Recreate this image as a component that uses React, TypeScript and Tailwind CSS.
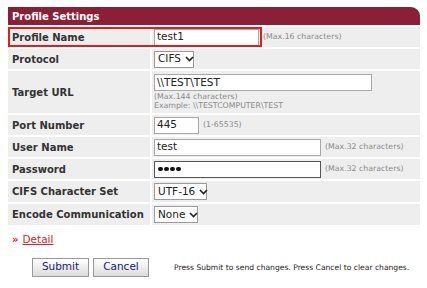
import React from "react";

const font = { fontFamily: '"DejaVu Sans", Verdana, sans-serif' };

function Chevron() {
  return (
    <svg width="9" height="6" viewBox="0 0 9 6" className="ml-[4px] shrink-0">
      <path d="M1 1l3.5 3.5L8 1" fill="none" stroke="#222" strokeWidth="1.6" />
    </svg>
  );
}

function Select({ value, w }: { value: string; w: string }) {
  return (
    <div
      className={`flex items-center h-[17px] ${w} border border-[#9a9a9a] bg-white px-[3px] text-[10.5px] text-[#222] whitespace-nowrap`}
    >
      <span>{value}</span>
      <Chevron />
    </div>
  );
}

function Input({
  value,
  w,
  dark,
  children,
}: {
  value?: string;
  w: string;
  dark?: boolean;
  children?: React.ReactNode;
}) {
  return (
    <div
      className={`flex items-center h-[17px] ${w} shrink-0 border ${
        dark ? "border-[#555]" : "border-[#a8a8a8]"
      } bg-white px-[2px] text-[10.5px] text-[#222] whitespace-nowrap`}
    >
      {value}
      {children}
    </div>
  );
}

function Note({ children }: { children: React.ReactNode }) {
  return (
    <span className="text-[7.8px] text-[#8a8a8a] ml-[4px] whitespace-nowrap">{children}</span>
  );
}

function Row({
  label,
  children,
  h = "h-[20px]",
}: {
  label: string;
  children: React.ReactNode;
  h?: string;
}) {
  return (
    <div className={`flex gap-[2px] ${h}`}>
      <div className="w-[142px] shrink-0 bg-[#eeeeee] flex items-center pl-[4px] text-[10px] font-bold text-[#333] whitespace-nowrap">
        {label}
      </div>
      <div className="flex-1 bg-[#eeeeee] flex items-center pl-[2px]">{children}</div>
    </div>
  );
}

export default function App() {
  return (
    <div className="w-[427px] h-[288px] bg-white pt-[7px]" style={font}>
      <div className="w-[412px] ml-[8px]">
        <div className="h-[18px] bg-[#8b1f37] rounded-tr-[9px] flex items-center pl-[4px] text-[10px] font-bold text-white">
          Profile Settings
        </div>
        <div className="flex flex-col gap-[2px] pt-[2px]">
          <div className="relative">
            <Row label="Profile Name">
              <Input value="test1" w="w-[105px]" />
              <Note>(Max.16 characters)</Note>
            </Row>
            <div className="absolute left-0 top-0 w-[254px] h-[20px] border-2 border-[#e01e1e] pointer-events-none" />
          </div>
          <Row label="Protocol">
            <Select value="CIFS" w="w-[40px]" />
          </Row>
          <Row label="Target URL" h="h-[42px]">
            <div className="flex flex-col">
              <Input value="\\TEST\TEST" w="w-[218px]" />
              <span className="text-[7.8px] text-[#8a8a8a] leading-[9px] mt-[1px]">(Max.144 characters)</span>
              <span className="text-[7.8px] text-[#8a8a8a] leading-[9px]">Example: \\TESTCOMPUTER\TEST</span>
            </div>
          </Row>
          <Row label="Port Number">
            <Input value="445" w="w-[45px]" />
            <Note>(1-65535)</Note>
          </Row>
          <Row label="User Name">
            <Input value="test" w="w-[167px]" />
            <Note>(Max.32 characters)</Note>
          </Row>
          <Row label="Password">
            <Input w="w-[167px]" dark>
              <div className="flex gap-[1.5px] pl-[1px]">
                <div className="w-[4.5px] h-[4.5px] rounded-full bg-[#111]" />
                <div className="w-[4.5px] h-[4.5px] rounded-full bg-[#111]" />
                <div className="w-[4.5px] h-[4.5px] rounded-full bg-[#111]" />
                <div className="w-[4.5px] h-[4.5px] rounded-full bg-[#111]" />
              </div>
            </Input>
            <Note>(Max.32 characters)</Note>
          </Row>
          <Row label="CIFS Character Set" h="h-[21px]">
            <Select value="UTF-16" w="w-[53px]" />
          </Row>
          <Row label="Encode Communication" h="h-[21px]">
            <Select value="None" w="w-[44px]" />
          </Row>
        </div>
        <div className="flex items-center mt-[7px] pl-[4px] text-[10.5px]">
          <span className="text-[#e02020] font-bold text-[10px] mr-[4px]">»</span>
          <a href="#" className="text-[#e02020] underline">
            Detail
          </a>
        </div>
        <div className="flex items-center mt-[10px] pl-[24px]">
          <button className="w-[57px] h-[19px] border border-[#999] bg-gradient-to-b from-white to-[#dcdcdc] text-[10.5px] text-[#1a1a7a]">
            Submit
          </button>
          <button className="w-[56px] h-[19px] ml-[4px] border border-[#999] bg-gradient-to-b from-white to-[#dcdcdc] text-[10.5px] text-[#1a1a7a]">
            Cancel
          </button>
          <span className="ml-[25px] text-[7.6px] text-[#222] whitespace-nowrap">
            Press Submit to send changes. Press Cancel to clear changes.
          </span>
        </div>
      </div>
    </div>
  );
}
